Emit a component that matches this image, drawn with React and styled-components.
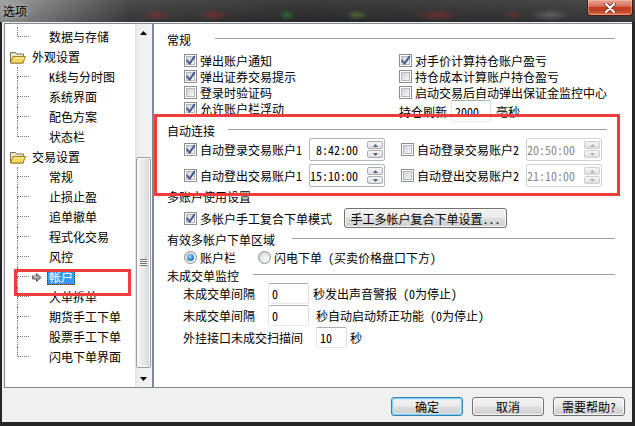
import React from 'react';
import styled, { createGlobalStyle } from 'styled-components';

const GlobalStyle = createGlobalStyle`
  html, body {
    margin: 0;
    padding: 0;
  }
  body {
    width: 635px;
    height: 426px;
    overflow: hidden;
    font-family: "Noto Sans CJK SC", "Liberation Sans", sans-serif;
    font-size: 12px;
    color: #000;
    font-feature-settings: "hwid";
  }
`;

const Window = styled.div`
  position: relative;
  width: 635px;
  height: 426px;
  display: flex;
  flex-direction: column;
  background: #262626;
`;

const TitleBar = styled.div`
  height: 22px;
  flex: none;
  display: flex;
  justify-content: space-between;
  background:
    radial-gradient(ellipse 14px 6px at 157px 15px, rgba(210, 40, 40, 0.35), transparent),
    radial-gradient(ellipse 16px 6px at 213px 15px, rgba(210, 40, 40, 0.35), transparent),
    radial-gradient(ellipse 8px 6px at 287px 15px, rgba(40, 200, 60, 0.35), transparent),
    radial-gradient(ellipse 12px 5px at 357px 15px, rgba(130, 200, 60, 0.35), transparent),
    radial-gradient(ellipse 22px 6px at 437px 15px, rgba(210, 40, 40, 0.35), transparent),
    radial-gradient(ellipse 8px 5px at 513px 15px, rgba(210, 40, 40, 0.3), transparent),
    radial-gradient(ellipse 20px 6px at 550px 15px, rgba(210, 210, 210, 0.25), transparent),
    linear-gradient(180deg, rgba(255, 255, 255, 0.08), rgba(0, 0, 0, 0.1)),
    linear-gradient(90deg, #9a9a9a 0, #6e6e6e 60px, #3c3c3c 130px, #2c2c2c 300px, #333 500px, #3c3c3c 100%);
`;

const Title = styled.span`
  margin: 4px 0 0 3px;
  line-height: 14px;
  text-shadow: 0 0 6px rgba(255, 255, 255, 0.7);
`;

const CloseButton = styled.div`
  width: 46px;
  height: 16px;
  margin-right: 2px;
  box-sizing: border-box;
  border: 1px solid #4a1a12;
  border-top: none;
  border-radius: 0 0 4px 4px;
  background: linear-gradient(180deg, #e9a797 0%, #d8705a 42%, #c33b1e 50%, #c24a2a 78%, #e07c52 100%);
  box-shadow: inset 0 0 0 1px rgba(255, 200, 180, 0.45);
  display: flex;
  align-items: center;
  justify-content: center;
`;

const Frame = styled.div`
  flex: 1;
  display: flex;
  padding: 0 3px 4px 2px;
  min-height: 0;
`;

const Body = styled.div`
  flex: 1;
  background: #f0f0f0;
  display: flex;
  flex-direction: column;
  padding: 1px 0 0 2px;
`;

const Panels = styled.div`
  height: 365px;
  display: flex;
  flex: none;
`;

const TreePanel = styled.div`
  width: 149px;
  flex: none;
  box-sizing: border-box;
  border: 1px solid #828790;
  background: #fff;
  display: flex;
  overflow: hidden;
`;

const TreeList = styled.div`
  flex: 1;
  padding-top: 3px;
  overflow: hidden;
`;

const TreeRow = styled.div`
  height: 20px;
  display: flex;
  align-items: center;
  white-space: nowrap;
`;

const Connector = styled.span`
  width: 12px;
  height: 20px;
  margin-left: 12px;
  flex: none;
  display: flex;
  flex-direction: column;
  &::before {
    content: '';
    height: 10px;
    box-sizing: border-box;
    border-left: 1px dotted #7a7a7a;
    border-bottom: 1px dotted #7a7a7a;
  }
  &::after {
    content: '';
    flex: 1;
    border-left: ${(p) => (p.$last ? 'none' : '1px dotted #7a7a7a')};
  }
`;

const IconSlot = styled.span`
  width: 18px;
  flex: none;
  display: flex;
  align-items: center;
  padding-left: 3px;
  box-sizing: border-box;
`;

const FolderSlot = styled.span`
  margin: 0 4px 0 5px;
  display: flex;
`;

const NodeLabel = styled.span`
  padding: 0 2px;
  height: 16px;
  line-height: 16px;
  box-sizing: border-box;
  background: ${(p) => (p.$selected ? '#3399ff' : 'transparent')};
  color: ${(p) => (p.$selected ? '#fff' : '#000')};
  outline: ${(p) => (p.$selected ? '1px dotted #4a3a10' : 'none')};
  outline-offset: -1px;
`;

const ScrollBar = styled.div`
  width: 17px;
  flex: none;
  display: flex;
  flex-direction: column;
  background: linear-gradient(90deg, #e2e2e2 0, #eeeeee 3px, #f4f4f4 100%);
`;

const ScrollArrow = styled.div`
  height: 17px;
  flex: none;
  display: flex;
  align-items: center;
  justify-content: center;
  margin-top: ${(p) => (p.$bottom ? 'auto' : '0')};
`;

const Thumb = styled.div`
  margin: 0 1px;
  box-sizing: border-box;
  border: 1px solid #9a9a9a;
  border-radius: 2px;
  background: linear-gradient(90deg, #f5f5f5, #e8e8e8 50%, #d4d4d4);
  box-shadow: inset 0 0 0 1px rgba(255, 255, 255, 0.8);
  display: flex;
  align-items: center;
  justify-content: center;
`;

const Grip = styled.span`
  width: 7px;
  height: 7px;
  background: repeating-linear-gradient(180deg, #6e6e6e 0, #6e6e6e 1px, #fafafa 1px, #fafafa 2px);
`;

const RightPanel = styled.div`
  flex: 1;
  min-width: 0;
  background: #fff;
  box-sizing: border-box;
  border: 1px solid #828790;
  border-right: none;
  padding-left: 13px;
  display: flex;
  flex-direction: column;
`;

const GroupHead = styled.div`
  height: ${(p) => p.$h || 16}px;
  margin-top: ${(p) => p.$mt || 0}px;
  flex: none;
  display: flex;
  align-items: center;
  white-space: nowrap;
  &::after {
    content: '';
    display: ${(p) => (p.$noLine ? 'none' : 'block')};
    flex: 1;
    margin-left: ${(p) => p.$gap || 14}px;
    margin-right: ${(p) => p.$end || 17}px;
    border-top: 1px solid #a0a0a0;
    border-bottom: 1px solid #fff;
  }
`;

const OptionGrid = styled.div`
  display: grid;
  grid-template-columns: 215px 1fr;
  grid-auto-rows: 16px;
  margin: 5px 0 0 17px;
`;

const CheckItem = styled.label`
  display: flex;
  align-items: center;
  gap: 3px;
  white-space: nowrap;
`;

const Inline = styled.div`
  display: flex;
  align-items: center;
  height: 22px;
  white-space: nowrap;
`;

const Box = styled.span`
  width: 13px;
  height: 13px;
  flex: none;
  box-sizing: border-box;
  border: 1px solid #8e8f8f;
  background: #fff;
  display: grid;
  place-items: center;
  &::before {
    content: '';
    grid-area: 1 / 1;
    width: 9px;
    height: 9px;
    box-sizing: border-box;
    border: 1px solid #b4b8be;
    background: linear-gradient(135deg, #d0d4da, #f7f7f7);
  }
`;

const CheckMark = styled.svg`
  grid-area: 1 / 1;
  width: 11px;
  height: 11px;
  fill: none;
  stroke: #4a5a92;
  stroke-width: 2;
  stroke-linecap: round;
  stroke-linejoin: round;
`;

const Radio = styled.span`
  width: 13px;
  height: 13px;
  flex: none;
  box-sizing: border-box;
  border: 1px solid #8e8f8f;
  border-radius: 50%;
  background: radial-gradient(circle at 65% 65%, #fbfbfb, #d3d6db 80%);
  display: grid;
  place-items: center;
  &::after {
    content: '';
    display: ${(p) => (p.$on ? 'block' : 'none')};
    width: 7px;
    height: 7px;
    border-radius: 50%;
    background: radial-gradient(circle at 40% 35%, #9bd8ff, #2d7fc8 60%, #174f8c);
  }
`;

const TextField = styled.div`
  width: ${(p) => p.$w}px;
  height: ${(p) => p.$h || 21}px;
  flex: none;
  box-sizing: border-box;
  margin-left: ${(p) => p.$ml || 0}px;
  margin-right: ${(p) => p.$mr || 0}px;
  padding-left: 3px;
  border: 1px solid;
  border-color: #abadb3 #dbdfe6 #e3e9ef #e2e3ea;
  border-radius: 2px;
  background: #fff;
  display: flex;
  align-items: center;
`;

const TimeGrid = styled.div`
  display: grid;
  grid-template-columns: 217px 1fr;
  grid-auto-rows: 23px;
  row-gap: 3px;
  margin-left: 17px;
`;

const TimeItem = styled.div`
  display: flex;
  align-items: center;
  gap: 7px;
`;

const TimeBox = styled.div`
  width: 76px;
  height: 23px;
  box-sizing: border-box;
  border: 1px solid ${(p) => (p.$disabled ? '#d2d2d2' : '#b3b6bd')};
  border-radius: 2px;
  background: #fff;
  color: ${(p) => (p.$disabled ? '#8a8a8a' : '#000')};
  display: flex;
  align-items: center;
  justify-content: flex-end;
`;

const TimeText = styled.span`
  padding-right: 9px;
`;

const Spin = styled.div`
  width: 16px;
  height: 17px;
  margin-right: 1px;
  display: flex;
  flex-direction: column;
  gap: 1px;
`;

const SpinButton = styled.span`
  flex: 1;
  box-sizing: border-box;
  border: 1px solid ${(p) => (p.$disabled ? '#cfcfcf' : '#a9acb2')};
  border-radius: 2px;
  background: linear-gradient(180deg, #f6f6f6, #dedede);
  display: flex;
  align-items: center;
  justify-content: center;
  svg {
    fill: ${(p) => (p.$disabled ? '#b0b0b0' : '#4d6185')};
  }
`;

const MultiRow = styled.div`
  height: 20px;
  margin: 4px 0 0 17px;
  display: flex;
  align-items: center;
`;

const PushButton = styled.button`
  font: inherit;
  color: #000;
  width: ${(p) => p.$w || 72}px;
  height: ${(p) => p.$h || 19}px;
  margin-left: ${(p) => p.$ml || 0}px;
  padding: 0;
  box-sizing: border-box;
  border: 1px solid ${(p) => (p.$default ? '#3c7fb1' : '#707070')};
  border-radius: 3px;
  background: linear-gradient(180deg, #f2f2f2 0%, #ebebeb 48%, #dddddd 52%, #cfcfcf 100%);
  box-shadow: ${(p) =>
    p.$default
      ? 'inset 0 0 0 1px #7fd0f5, inset 0 0 0 2px rgba(200, 235, 250, 0.7)'
      : 'inset 0 0 0 1px rgba(255, 255, 255, 0.85)'};
  display: flex;
  align-items: center;
  justify-content: center;
  white-space: nowrap;
`;

const RadioRow = styled.div`
  height: 16px;
  margin: 2px 0 0 17px;
  display: flex;
  align-items: center;
  white-space: nowrap;
`;

const RadioItem = styled.label`
  display: flex;
  align-items: center;
  gap: 3px;
  margin-left: ${(p) => p.$ml || 0}px;
`;

const FieldRows = styled.div`
  margin-left: 16px;
  display: flex;
  flex-direction: column;
`;

const FieldLabel = styled.span`
  width: ${(p) => p.$w}px;
  flex: none;
`;

const ButtonRow = styled.div`
  display: flex;
  justify-content: flex-end;
  gap: 9px;
  margin-top: 9px;
  padding-right: 7px;
`;

const Annotation = styled.div`
  position: absolute;
  left: ${(p) => p.$x}px;
  top: ${(p) => p.$y}px;
  width: ${(p) => p.$w}px;
  height: ${(p) => p.$h}px;
  box-sizing: border-box;
  border: 3px solid #ef3d3d;
  pointer-events: none;
`;

const treeItems = [
  { label: '数据与存储', last: true },
  { label: '外观设置', folder: true },
  { label: 'K线与分时图' },
  { label: '系统界面' },
  { label: '配色方案' },
  { label: '状态栏', last: true },
  { label: '交易设置', folder: true },
  { label: '常规' },
  { label: '止损止盈' },
  { label: '追单撤单' },
  { label: '程式化交易' },
  { label: '风控' },
  { label: '帐户', selected: true },
  { label: '大单拆单' },
  { label: '期货手工下单' },
  { label: '股票手工下单' },
  { label: '闪电下单界面', last: true },
];

function FolderIcon() {
  return (
    <svg width="16" height="13" viewBox="0 0 16 13">
      <path d="M0.5 1.5 h5 l1 1.5 h7 v9 h-13 z" fill="#ece6c8" stroke="#7d7350" />
      <path d="M3 5.5 h12.5 l-2.5 6.5 h-12.5 z" fill="#f4d75a" stroke="#9c8428" />
      <path d="M4 7 h10" stroke="#fff3b0" />
    </svg>
  );
}

function CurrentArrow() {
  return (
    <svg width="10" height="9" viewBox="0 0 10 9">
      <path d="M0.5 3 h4 v-2.5 l4.5 4 l-4.5 4 v-2.5 h-4 z" fill="#9a9a9a" stroke="#5e5e5e" />
      <path d="M1.5 4 h4" stroke="#e6e6e6" />
    </svg>
  );
}

function Triangle({ up, w = 7, h = 4 }) {
  return (
    <svg width={w} height={h} viewBox={`0 0 ${w} ${h}`}>
      <path d={up ? `M0 ${h} L${w / 2} 0 L${w} ${h} z` : `M0 0 L${w / 2} ${h} L${w} 0 z`} />
    </svg>
  );
}

function CheckBox({ checked }) {
  return (
    <Box>
      {checked && (
        <CheckMark viewBox="0 0 11 11">
          <path d="M2.2 5.6 L4.6 8.6 L9.4 1.6" />
        </CheckMark>
      )}
    </Box>
  );
}

function Check({ checked, children }) {
  return (
    <CheckItem>
      <CheckBox checked={checked} />
      <span>{children}</span>
    </CheckItem>
  );
}

function TimeControl({ value, disabled }) {
  return (
    <TimeBox $disabled={disabled}>
      <TimeText>{value}</TimeText>
      <Spin>
        <SpinButton $disabled={disabled}>
          <Triangle up w={5} h={3} />
        </SpinButton>
        <SpinButton $disabled={disabled}>
          <Triangle w={5} h={3} />
        </SpinButton>
      </Spin>
    </TimeBox>
  );
}

function TreeNode({ item }) {
  if (item.folder) {
    return (
      <TreeRow>
        <FolderSlot>
          <FolderIcon />
        </FolderSlot>
        <NodeLabel>{item.label}</NodeLabel>
      </TreeRow>
    );
  }
  return (
    <TreeRow>
      <Connector $last={item.last} />
      <IconSlot>{item.selected && <CurrentArrow />}</IconSlot>
      <NodeLabel $selected={item.selected}>{item.label}</NodeLabel>
    </TreeRow>
  );
}

export default function App() {
  return (
    <>
      <GlobalStyle />
      <Window>
        <TitleBar>
          <Title>选项</Title>
          <CloseButton>
            <svg width="12" height="10" viewBox="0 0 12 10">
              <path d="M2 1 L10 9 M10 1 L2 9" stroke="#5a2a22" strokeWidth="3.6" strokeLinecap="round" />
              <path d="M2 1 L10 9 M10 1 L2 9" stroke="#fff" strokeWidth="2.2" strokeLinecap="round" />
            </svg>
          </CloseButton>
        </TitleBar>
        <Frame>
          <Body>
            <Panels>
              <TreePanel>
                <TreeList>
                  {treeItems.map((item) => (
                    <TreeNode key={item.label} item={item} />
                  ))}
                </TreeList>
                <ScrollBar>
                  <ScrollArrow>
                    <Triangle up />
                  </ScrollArrow>
                  <Thumb style={{ marginTop: 116, height: 211 }}>
                    <Grip />
                  </Thumb>
                  <ScrollArrow $bottom>
                    <Triangle />
                  </ScrollArrow>
                </ScrollBar>
              </TreePanel>

              <RightPanel>
                <GroupHead $mt={7} $gap={24}>常规</GroupHead>
                <OptionGrid>
                  <Check checked>弹出账户通知</Check>
                  <Check checked>对手价计算持仓账户盈亏</Check>
                  <Check checked>弹出证券交易提示</Check>
                  <Check>持仓成本计算账户持仓盈亏</Check>
                  <Check>登录时验证码</Check>
                  <Check>启动交易后自动弹出保证金监控中心</Check>
                  <Check checked>允许账户栏浮动</Check>
                  <Inline>
                    <span>持仓刷新</span>
                    <TextField $w={40} $h={22} $ml={4} $mr={5}>2000</TextField>
                    <span>毫秒</span>
                  </Inline>
                </OptionGrid>

                <GroupHead $mt={6} $gap={13} $end={25}>自动连接</GroupHead>
                <TimeGrid>
                  <TimeItem>
                    <Check checked>自动登录交易账户1</Check>
                    <TimeControl value="8:42:00" />
                  </TimeItem>
                  <TimeItem>
                    <Check>自动登录交易账户2</Check>
                    <TimeControl value="20:50:00" disabled />
                  </TimeItem>
                  <TimeItem>
                    <Check checked>自动登出交易账户1</Check>
                    <TimeControl value="15:10:00" />
                  </TimeItem>
                  <TimeItem>
                    <Check>自动登出交易账户2</Check>
                    <TimeControl value="21:10:00" disabled />
                  </TimeItem>
                </TimeGrid>

                <GroupHead $mt={1} $noLine>多账户使用设置</GroupHead>
                <MultiRow>
                  <Check checked>多帐户手工复合下单模式</Check>
                  <PushButton $w={163} $h={20} $ml={12}>
                    手工多帐户复合下单设置...
                  </PushButton>
                </MultiRow>

                <GroupHead $mt={3} $gap={17}>有效多帐户下单区域</GroupHead>
                <RadioRow>
                  <RadioItem>
                    <Radio $on />
                    <span>账户栏</span>
                  </RadioItem>
                  <RadioItem $ml={22}>
                    <Radio />
                    <span>闪电下单 (买卖价格盘口下方)</span>
                  </RadioItem>
                </RadioRow>

                <GroupHead $mt={3} $h={14} $gap={14}>未成交单监控</GroupHead>
                <FieldRows>
                  <Inline>
                    <FieldLabel $w={72}>未成交单间隔</FieldLabel>
                    <TextField $w={41} $ml={13} $mr={4}>0</TextField>
                    <span>秒发出声音警报 (0为停止）</span>
                  </Inline>
                  <Inline>
                    <FieldLabel $w={72}>未成交单间隔</FieldLabel>
                    <TextField $w={41} $ml={13} $mr={7}>0</TextField>
                    <span>秒自动启动矫正功能 (0为停止）</span>
                  </Inline>
                  <Inline>
                    <FieldLabel $w={120}>外挂接口未成交扫描间</FieldLabel>
                    <TextField $w={31} $ml={13} $mr={3}>10</TextField>
                    <span>秒</span>
                  </Inline>
                </FieldRows>
              </RightPanel>
            </Panels>

            <ButtonRow>
              <PushButton $default>确定</PushButton>
              <PushButton>取消</PushButton>
              <PushButton>需要帮助?</PushButton>
            </ButtonRow>
          </Body>
        </Frame>

        <Annotation $x={14} $y={269} $w={117} $h={27} />
        <Annotation $x={154} $y={114} $w={466} $h={82} />
      </Window>
    </>
  );
}
